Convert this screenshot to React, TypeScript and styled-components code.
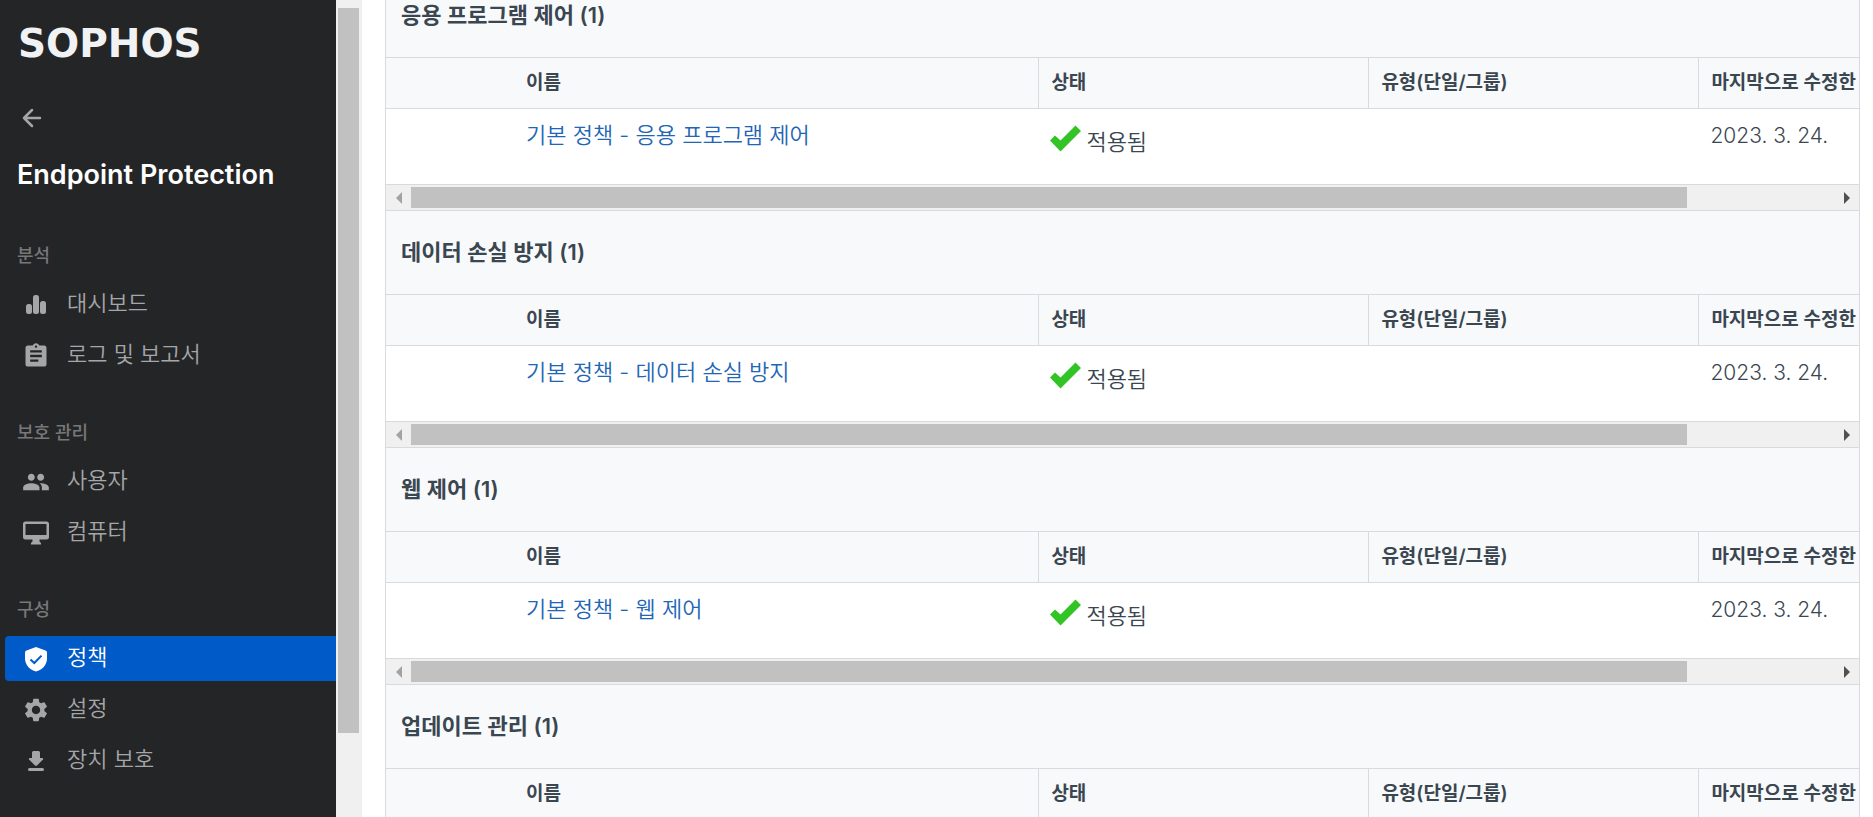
import React from 'react';
import styled, { createGlobalStyle } from 'styled-components';
import { MdAssignment, MdPeople, MdSettings } from 'react-icons/md';

const GlobalStyle = createGlobalStyle`
  *, *::before, *::after { box-sizing: border-box; }
  body {
    margin: 0;
    background: #fff;
    font-family: Inter, "Noto Sans CJK KR", sans-serif;
    color: #3a4650;
  }
`;

const Shell = styled.div`
  display: flex;
  height: 100vh;
  overflow: hidden;
`;

const Sidebar = styled.aside`
  flex: 0 0 336px;
  background: #242527;
  overflow: hidden;
`;

const Brand = styled.div`
  height: 88px;
  padding: 21px 0 0 18px;
  font: bold 39px/46px "DejaVu Sans", sans-serif;
  color: #f1f2f4;
`;

const BackButton = styled.button`
  display: flex;
  align-items: center;
  height: 60px;
  margin: 0 0 0 22px;
  padding: 0;
  border: 0;
  background: none;
  color: #a5a6a8;
`;

const ProductTitle = styled.h1`
  margin: 8px 0 48px 17px;
  font-size: 27px;
  line-height: 37px;
  font-weight: 600;
  color: #fff;
`;

const NavGroup = styled.section`
  margin-bottom: 40px;
`;

const NavLabel = styled.h2`
  margin: 0 0 11px 17px;
  font-size: 18px;
  line-height: 30px;
  font-weight: 500;
  color: #77787a;
`;

const NavList = styled.ul`
  display: grid;
  gap: 6px;
  margin: 0;
  padding: 0 0 0 5px;
  list-style: none;
`;

const NavLink = styled.a<{ $active?: boolean }>`
  display: flex;
  align-items: center;
  gap: 17px;
  height: 45px;
  padding-left: 17px;
  border-radius: 4px 0 0 4px;
  font-size: 22px;
  font-weight: 350;
  line-height: 30px;
  text-decoration: none;
  color: ${(p) => (p.$active ? '#fff' : '#a5a6a8')};
  background: ${(p) => (p.$active ? '#005bc8' : 'transparent')};
  svg { flex: none; width: 28px; height: 28px; }
  span { padding-bottom: 4px; }
`;

const PageScrollbar = styled.div`
  flex: 0 0 26px;
  padding: 8px 3px 0 2px;
  background: #f0f0f0;
`;

const PageThumb = styled.div`
  height: 89.6%;
  background: #c1c1c1;
`;

const Main = styled.main`
  flex: 1;
  min-width: 0;
  padding: 0 13px 0 23px;
`;

const PolicyList = styled.div`
  margin-top: -26px;
  border: solid #d8dbde;
  border-width: 0 1px;
`;

const SectionTitle = styled.h3`
  margin: 0;
  padding: 0 15px;
  height: 83px;
  font-size: 22px;
  line-height: 82px;
  font-weight: 600;
  background: #f8f9fb;
`;

const TableViewport = styled.div`
  overflow: hidden;
`;

const Table = styled.table`
  width: 111.5%;
  table-layout: fixed;
  border-collapse: separate;
  border-spacing: 0;
`;

const HeadCell = styled.th<{ $width?: number; $divided?: boolean }>`
  width: ${(p) => (p.$width ? `${p.$width}px` : 'auto')};
  height: 52px;
  padding: 0 12px 1px;
  border: solid #d8dbde;
  border-width: 1px 0 1px ${(p) => (p.$divided ? '1px' : '0')};
  background: #f8f9fb;
  text-align: left;
  font-size: 19px;
  line-height: 26px;
  font-weight: 600;
  white-space: nowrap;
`;

const Cell = styled.td<{ $numeric?: boolean }>`
  height: 75px;
  padding: ${(p) => (p.$numeric ? 12 : 11)}px 12px 0;
  vertical-align: top;
  font-size: ${(p) => (p.$numeric ? 21 : 22)}px;
  font-weight: 350;
  line-height: 30px;
  white-space: nowrap;
`;

const PolicyLink = styled.a`
  color: #1f66b5;
  text-decoration: none;
`;

const Status = styled.span`
  display: flex;
  align-items: flex-start;
  gap: 5px;
  span { padding-top: 7px; }
  svg { margin-top: 5px; }
`;

const HScrollbar = styled.div`
  display: flex;
  height: 27px;
  border: solid #d8dbde;
  border-width: 1px 0;
  background: #f0f0f0;
`;

const ScrollArrow = styled.button`
  display: flex;
  align-items: center;
  justify-content: center;
  flex: 0 0 25px;
  padding: 0;
  border: 0;
  background: none;
`;

const ScrollTrack = styled.div`
  flex: 1;
  padding: 2px 0;
`;

const ScrollThumb = styled.div`
  width: 89.7%;
  height: 21px;
  background: #c1c1c1;
`;

const BarsIcon = () => (
  <svg viewBox="0 0 28 28" fill="currentColor" aria-hidden="true">
    <rect x="4" y="13" width="6" height="10" rx="2.500" />
    <rect x="11" y="4" width="6" height="19" rx="2.500" />
    <rect x="18" y="10" width="6" height="13" rx="2.500" />
  </svg>
);

const MonitorIcon = () => (
  <svg viewBox="0 0 28 28" fill="currentColor" aria-hidden="true">
    <path fillRule="evenodd" d="M3.500 2.500 H24.500 Q27 2.500 27 5 V18 Q27 20.500 24.500 20.500 H17.500 V22.500 L19 24 V25.500 H9 V24 L10.500 22.500 V20.500 H3.500 Q1 20.500 1 18 V5 Q1 2.500 3.500 2.500 Z M3.500 5 V16 H24.500 V5 Z" />
  </svg>
);

const ShieldIcon = () => (
  <svg viewBox="0 0 28 28" aria-hidden="true">
    <path d="M14 2 L23.500 5.400 Q25 6 25 7.500 V13.500 C25 20 20 25 14 26.500 C8 25 3 20 3 13.500 V7.500 Q3 6 4.500 5.400 Z" fill="currentColor" />
    <path d="M8.500 14.500 L12.300 18 L19.500 10.600" fill="none" stroke="#005bc8" strokeWidth="2" />
  </svg>
);

const DownloadIcon = () => (
  <svg viewBox="0 0 28 28" fill="currentColor" aria-hidden="true">
    <path d="M11.500 4 H16.500 Q18 4 18 5.500 V11 H20 Q22 11.200 20.800 12.800 L15 18.400 Q14 19.200 13 18.400 L7.200 12.800 Q6 11.200 8 11 H10 V5.500 Q10 4 11.500 4 Z" />
    <rect x="6" y="21" width="16" height="3" rx="1.500" />
  </svg>
);

const CheckMark = () => (
  <svg width="31" height="27" viewBox="0 0 31 27" aria-hidden="true">
    <path d="M0 15.500 L5 10.500 L10.500 15.500 L25.500 0.500 L31 6 L10.500 26.500 Z" fill="#32c425" />
  </svg>
);

const navGroups = [
  {
    label: '분석',
    items: [
      { text: '대시보드', icon: <BarsIcon /> },
      { text: '로그 및 보고서', icon: <MdAssignment /> },
    ],
  },
  {
    label: '보호 관리',
    items: [
      { text: '사용자', icon: <MdPeople /> },
      { text: '컴퓨터', icon: <MonitorIcon /> },
    ],
  },
  {
    label: '구성',
    items: [
      { text: '정책', icon: <ShieldIcon />, active: true },
      { text: '설정', icon: <MdSettings /> },
      { text: '장치 보호', icon: <DownloadIcon /> },
    ],
  },
];

const sections = [
  { title: '응용 프로그램 제어 (1)', policy: '기본 정책 - 응용 프로그램 제어' },
  { title: '데이터 손실 방지 (1)', policy: '기본 정책 - 데이터 손실 방지' },
  { title: '웹 제어 (1)', policy: '기본 정책 - 웹 제어' },
  { title: '업데이트 관리 (1)' },
];

const PolicySection = ({ title, policy }: { title: string; policy?: string }) => (
  <section>
    <SectionTitle>{title}</SectionTitle>
    <TableViewport>
      <Table>
        <thead>
          <tr>
            <HeadCell $width={128} />
            <HeadCell>이름</HeadCell>
            <HeadCell $width={330} $divided>상태</HeadCell>
            <HeadCell $width={330} $divided>유형(단일/그룹)</HeadCell>
            <HeadCell $width={330} $divided>마지막으로 수정한</HeadCell>
          </tr>
        </thead>
        {policy && (
          <tbody>
            <tr>
              <Cell />
              <Cell><PolicyLink href="#policy">{policy}</PolicyLink></Cell>
              <Cell><Status><CheckMark /><span>적용됨</span></Status></Cell>
              <Cell />
              <Cell $numeric>2023. 3. 24.</Cell>
            </tr>
          </tbody>
        )}
      </Table>
    </TableViewport>
    {policy && (
      <HScrollbar>
        <ScrollArrow type="button" aria-label="왼쪽으로 스크롤">
          <svg width="6" height="12" viewBox="0 0 6 12"><path d="M6 0 V12 L0 6 Z" fill="#a3a3a3" /></svg>
        </ScrollArrow>
        <ScrollTrack><ScrollThumb /></ScrollTrack>
        <ScrollArrow type="button" aria-label="오른쪽으로 스크롤">
          <svg width="6" height="12" viewBox="0 0 6 12"><path d="M0 0 V12 L6 6 Z" fill="#505050" /></svg>
        </ScrollArrow>
      </HScrollbar>
    )}
  </section>
);

export default function App() {
  return (
    <Shell>
      <GlobalStyle />
      <Sidebar>
        <Brand>SOPHOS</Brand>
        <BackButton type="button" aria-label="뒤로">
          <svg width="20" height="20" viewBox="0 0 20 20" fill="none" stroke="currentColor" strokeWidth="2.500" strokeLinecap="round" strokeLinejoin="round">
            <path d="M18 10 H2 M10 2 L2 10 L10 18" />
          </svg>
        </BackButton>
        <ProductTitle>Endpoint Protection</ProductTitle>
        <nav>
          {navGroups.map((g) => (
            <NavGroup key={g.label}>
              <NavLabel>{g.label}</NavLabel>
              <NavList>
                {g.items.map((it: { text: string; icon: React.ReactNode; active?: boolean }) => (
                  <li key={it.text}>
                    <NavLink href="#nav" $active={it.active} aria-current={it.active ? 'page' : undefined}>
                      {it.icon}
                      <span>{it.text}</span>
                    </NavLink>
                  </li>
                ))}
              </NavList>
            </NavGroup>
          ))}
        </nav>
      </Sidebar>
      <PageScrollbar><PageThumb /></PageScrollbar>
      <Main>
        <PolicyList>
          {sections.map((s) => <PolicySection key={s.title} {...s} />)}
        </PolicyList>
      </Main>
    </Shell>
  );
}
